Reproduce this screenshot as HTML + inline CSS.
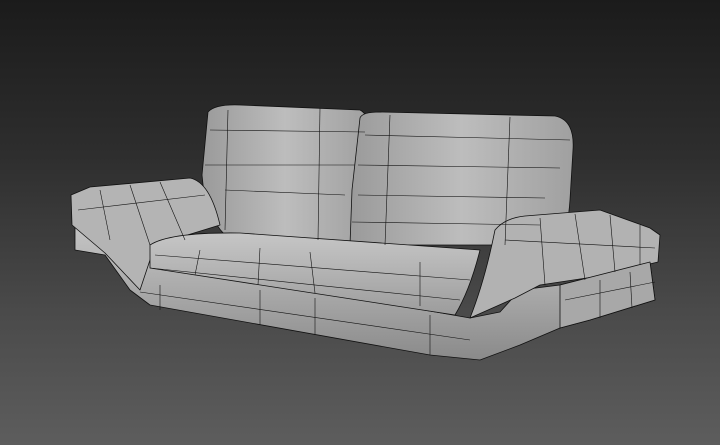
<!DOCTYPE html>
<html><head><style>
html,body{margin:0;padding:0;width:720px;height:445px;overflow:hidden}
body{background:linear-gradient(#1b1b1b 0%,#2e2e2e 35%,#4a4a4a 70%,#5d5d5d 100%)}
svg{display:block}
</style></head><body>
<svg width="720" height="445" viewBox="0 0 720 445">
<defs>
<linearGradient id="g1" x1="0" y1="0" x2="0" y2="1"><stop offset="0" stop-color="#c4c4c4"/><stop offset="0.5" stop-color="#a8a8a8"/><stop offset="1" stop-color="#8a8a8a"/></linearGradient>
<linearGradient id="g2" x1="0" y1="0" x2="1" y2="0"><stop offset="0" stop-color="#9a9a9a"/><stop offset="0.5" stop-color="#bdbdbd"/><stop offset="1" stop-color="#a0a0a0"/></linearGradient>
<linearGradient id="g3" x1="0" y1="0" x2="0" y2="1"><stop offset="0" stop-color="#c6c6c6"/><stop offset="0.4" stop-color="#b6b6b6"/><stop offset="1" stop-color="#9c9c9c"/></linearGradient>
</defs>
<g stroke="#111" stroke-width="0.8" stroke-linejoin="round">
<path d="M75 228 L105 228 L135 255 L150 262 L470 318 L500 312 L520 290 L560 285 L650 262 L655 300 L590 320 L560 328 L520 345 L480 360 L430 355 L150 305 L130 290 L105 255 L75 250 Z" fill="url(#g1)"/>
<path d="M208 112 Q215 104 240 105 L360 110 Q370 115 368 135 L355 190 L350 245 L225 235 Q205 215 202 175 Z" fill="url(#g2)"/>
<path d="M360 118 Q362 112 380 112 L555 116 Q575 120 573 150 L570 200 Q568 230 560 245 L350 245 L352 190 Z" fill="url(#g2)"/>
<path d="M71 195 L90 187 L190 178 Q210 182 220 225 L155 245 L140 290 L105 253 L72 225 Z" fill="#b4b4b4"/>
<path d="M150 245 Q170 232 240 233 L480 250 Q470 290 455 315 L150 268 Z" fill="url(#g3)"/>
<path d="M495 230 Q505 218 525 216 L600 210 L650 228 L660 235 L658 262 L600 276 L540 285 L515 298 L470 318 Q485 280 495 230 Z" fill="#b2b2b2"/>
<path d="M560 285 L650 262 L655 300 L590 320 L560 328 Z" fill="#a8a8a8"/>
</g>
<g stroke="#111" stroke-width="0.6" fill="none">
<path d="M210 130 L365 132"/><path d="M205 165 L355 165"/><path d="M225 190 L345 195"/>
<path d="M365 135 L570 140"/><path d="M358 165 L560 168"/><path d="M358 195 L545 198"/><path d="M352 222 L540 225"/>
<path d="M228 110 L225 230"/><path d="M320 108 L318 240"/><path d="M390 115 L385 245"/><path d="M510 117 L505 245"/>
<path d="M155 255 L470 280"/><path d="M150 268 L460 300"/><path d="M200 250 L195 275"/><path d="M260 248 L258 285"/><path d="M310 252 L315 293"/><path d="M420 262 L420 306"/>
<path d="M140 292 L470 340"/><path d="M160 285 L160 310"/><path d="M260 290 L260 325"/><path d="M315 298 L315 335"/><path d="M430 315 L430 355"/>
<path d="M78 210 L205 195"/><path d="M100 190 L110 240"/><path d="M130 185 L150 245"/><path d="M160 182 L185 240"/>
<path d="M505 240 L655 248"/><path d="M540 218 L545 285"/><path d="M575 214 L585 280"/><path d="M610 215 L615 272"/><path d="M640 225 L640 265"/>
<path d="M565 300 L655 282"/><path d="M600 280 L600 318"/><path d="M630 272 L632 308"/>
</g>
</svg>
</body></html>
